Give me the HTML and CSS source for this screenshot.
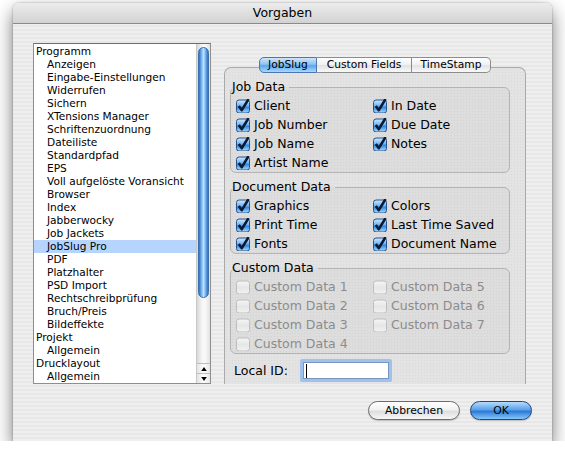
FILE: index.html
```html
<!DOCTYPE html>
<html lang="de">
<head>
<meta charset="utf-8">
<title>Vorgaben</title>
<link rel="stylesheet" href="styles.css">
</head>
<body>
<svg class="defs" width="0" height="0" aria-hidden="true">
  <defs>
    <linearGradient id="cbOn" x1="0" y1="0" x2="0" y2="1">
      <stop offset="0" stop-color="#d2eaff"/>
      <stop offset="0.45" stop-color="#6db3f2"/>
      <stop offset="0.55" stop-color="#2f86e0"/>
      <stop offset="1" stop-color="#a9dcff"/>
    </linearGradient>
    <linearGradient id="cbOff" x1="0" y1="0" x2="0" y2="1">
      <stop offset="0" stop-color="#f6f6f6"/>
      <stop offset="0.5" stop-color="#e6e6e6"/>
      <stop offset="1" stop-color="#f2f2f2"/>
    </linearGradient>
    <symbol id="checkOn" viewBox="0 0 14 14">
      <rect x="0.5" y="1" width="13" height="13" rx="2.5" fill="url(#cbOn)" stroke="#28508c"/>
      <path d="M2.8 7 L5.8 11.2 L12.6 0" stroke="#0a1a33" stroke-width="2.6" fill="none" stroke-linejoin="round"/>
    </symbol>
    <symbol id="checkOff" viewBox="0 0 14 14">
      <rect x="0.5" y="1" width="13" height="13" rx="2.5" fill="url(#cbOff)" stroke="#bdbdbd"/>
    </symbol>
  </defs>
</svg>

<div class="window">
  <div class="titlebar">Vorgaben</div>
  <div class="content">
    <div class="main">
      <div class="list">
        <ul class="items">
          <li class="l0">Programm</li>
          <li class="l1">Anzeigen</li>
          <li class="l1">Eingabe-Einstellungen</li>
          <li class="l1">Widerrufen</li>
          <li class="l1">Sichern</li>
          <li class="l1">XTensions Manager</li>
          <li class="l1">Schriftenzuordnung</li>
          <li class="l1">Dateiliste</li>
          <li class="l1">Standardpfad</li>
          <li class="l1">EPS</li>
          <li class="l1">Voll aufgelöste Voransicht</li>
          <li class="l1">Browser</li>
          <li class="l1">Index</li>
          <li class="l1">Jabberwocky</li>
          <li class="l1">Job Jackets</li>
          <li class="l1 selected">JobSlug Pro</li>
          <li class="l1">PDF</li>
          <li class="l1">Platzhalter</li>
          <li class="l1">PSD Import</li>
          <li class="l1">Rechtschreibprüfung</li>
          <li class="l1">Bruch/Preis</li>
          <li class="l1">Bildeffekte</li>
          <li class="l0">Projekt</li>
          <li class="l1">Allgemein</li>
          <li class="l0">Drucklayout</li>
          <li class="l1">Allgemein</li>
        </ul>
        <div class="scrollbar">
          <div class="track"><div class="thumb"></div></div>
          <div class="arrow up"><svg viewBox="0 0 7 5" width="6" height="4"><path d="M3.5 0 L7 5 L0 5 Z" fill="#000"/></svg></div>
          <div class="arrow down"><svg viewBox="0 0 7 5" width="6" height="4"><path d="M0 0 L7 0 L3.5 5 Z" fill="#000"/></svg></div>
        </div>
      </div>

      <div class="prefs">
        <div class="tabs">
          <div class="tab active">JobSlug</div>
          <div class="tab">Custom Fields</div>
          <div class="tab">TimeStamp</div>
        </div>
        <div class="panel">
          <fieldset class="group">
            <legend>Job Data</legend>
            <div class="grid">
              <label class="cb"><svg><use href="#checkOn"/></svg>Client</label>
              <label class="cb"><svg><use href="#checkOn"/></svg>In Date</label>
              <label class="cb"><svg><use href="#checkOn"/></svg>Job Number</label>
              <label class="cb"><svg><use href="#checkOn"/></svg>Due Date</label>
              <label class="cb"><svg><use href="#checkOn"/></svg>Job Name</label>
              <label class="cb"><svg><use href="#checkOn"/></svg>Notes</label>
              <label class="cb"><svg><use href="#checkOn"/></svg>Artist Name</label>
            </div>
          </fieldset>
          <fieldset class="group">
            <legend>Document Data</legend>
            <div class="grid">
              <label class="cb"><svg><use href="#checkOn"/></svg>Graphics</label>
              <label class="cb"><svg><use href="#checkOn"/></svg>Colors</label>
              <label class="cb"><svg><use href="#checkOn"/></svg>Print Time</label>
              <label class="cb"><svg><use href="#checkOn"/></svg>Last Time Saved</label>
              <label class="cb"><svg><use href="#checkOn"/></svg>Fonts</label>
              <label class="cb"><svg><use href="#checkOn"/></svg>Document Name</label>
            </div>
          </fieldset>
          <fieldset class="group">
            <legend>Custom Data</legend>
            <div class="grid">
              <label class="cb off"><svg><use href="#checkOff"/></svg>Custom Data 1</label>
              <label class="cb off"><svg><use href="#checkOff"/></svg>Custom Data 5</label>
              <label class="cb off"><svg><use href="#checkOff"/></svg>Custom Data 2</label>
              <label class="cb off"><svg><use href="#checkOff"/></svg>Custom Data 6</label>
              <label class="cb off"><svg><use href="#checkOff"/></svg>Custom Data 3</label>
              <label class="cb off"><svg><use href="#checkOff"/></svg>Custom Data 7</label>
              <label class="cb off"><svg><use href="#checkOff"/></svg>Custom Data 4</label>
            </div>
          </fieldset>
          <div class="localid">
            <span class="lbl">Local ID:</span>
            <div class="field"><span class="caret"></span></div>
          </div>
        </div>
      </div>
    </div>

    <div class="buttons">
      <div class="btn cancel">Abbrechen</div>
      <div class="btn ok">OK</div>
    </div>
  </div>
</div>
</body>
</html>
```

FILE: styles.css
```css
* { box-sizing: border-box; }
html, body { margin: 0; padding: 0; background: #fff; }
body { font-family: "DejaVu Sans", "Lucida Grande", sans-serif; color: #000; }
.defs { position: absolute; width: 0; height: 0; }

.window {
  margin: 3px 0 0 13px;
  width: 539px;
  height: 438px;
  border-radius: 6px 6px 0 0;
  box-shadow: 0 8px 18px rgba(0,0,0,0.55), 0 0 2px rgba(0,0,0,0.35);
  background: repeating-linear-gradient(to bottom, #efefef 0 2px, #e7e7e7 2px 4px);
  display: flex;
  flex-direction: column;
  overflow: hidden;
}
.titlebar {
  flex: none;
  height: 21px;
  background: linear-gradient(#ececec, #d2d2d2);
  border-bottom: 1px solid #8a8a8a;
  text-align: center;
  font-size: 12.5px;
  line-height: 20px;
}
.content {
  flex: 1;
  display: flex;
  flex-direction: column;
  padding: 19px 20px 22px 20px;
}
.main { display: flex; height: 341px; }

/* list */
.list {
  width: 178px;
  height: 341px;
  border: 1px solid #8e8e8e;
  border-top-color: #6e6e6e;
  background: #fff;
  display: flex;
}
.items {
  list-style: none;
  margin: 0;
  padding: 1px 0 0 0;
  flex: 1;
  font-size: 10.6px;
  overflow: hidden;
}
.items li { height: 13px; line-height: 13px; white-space: nowrap; }
.items .l0 { padding-left: 2px; }
.items .l1 { padding-left: 13px; }
.items .selected { background: #b5d5ff; }

.scrollbar {
  width: 14px;
  display: flex;
  flex-direction: column;
  border-left: 1px solid #c8c8c8;
}
.track {
  flex: 1;
  background: linear-gradient(to right, #d8d8d8, #f6f6f6 40%, #fafafa 60%, #e2e2e2);
  padding: 3px 1px 0 1px;
}
.thumb {
  height: 251px;
  border-radius: 6px;
  border: 1px solid #3c6fb0;
  background: linear-gradient(to right, #2f6fc0, #7cb8f2 30%, #bfe0ff 50%, #7cb8f2 70%, #2f6fc0);
}
.arrow {
  height: 10px;
  display: flex;
  align-items: center;
  justify-content: center;
  background: linear-gradient(to right, #e4e4e4, #fdfdfd 50%, #e8e8e8);
  border-top: 1px solid #bdbdbd;
}
.arrow svg { display: block; }

/* right side */
.prefs {
  margin-left: 13px;
  width: 302px;
  display: flex;
  flex-direction: column;
  padding-top: 14px;
}
.tabs {
  display: flex;
  justify-content: center;
  position: relative;
  z-index: 1;
  height: 16px;
  margin-bottom: -6px;
}
.tab {
  height: 16px;
  font-size: 10.7px;
  line-height: 14px;
  text-align: center;
  border: 1px solid #8c8c8c;
  border-left: none;
  background: linear-gradient(#ffffff, #f0f0f0 50%, #e2e2e2 51%, #f8f8f8);
}
.tab:nth-child(1) { width: 58px; border-left: 1px solid #5a7fb4; border-radius: 5px 0 0 5px; }
.tab:nth-child(2) { width: 95px; }
.tab:nth-child(3) { width: 79px; border-radius: 0 5px 5px 0; }
.tab.active {
  border-color: #4d76b0;
  background: linear-gradient(#cfe6fd, #8cc2f4 45%, #5ea5ec 55%, #a8dafc);
}

.panel {
  flex: 1;
  border: 1px solid #a9a9a9;
  border-bottom: none;
  border-radius: 7px 7px 0 0;
  background-color: #e3e3e3;
  background-image: radial-gradient(circle, #d9d9d9 0.6px, transparent 0.8px);
  background-size: 3px 3px;
  padding: 12px 15px 0 5px;
}
.group {
  margin: 0 0 7px 0;
  padding: 2px 0 0 5px;
  border: 1px solid #b4b4b4;
  border-radius: 6px;
  background: rgba(0,0,0,0.025);
  min-width: 0;
}
.group legend {
  font-size: 12.5px;
  line-height: 14px;
  padding: 0 4px 0 0;
  margin-left: -4px;
}
.grid {
  display: grid;
  grid-template-columns: 137px 1fr;
  grid-auto-rows: 19px;
}
.cb {
  display: flex;
  align-items: center;
  font-size: 12.5px;
  white-space: nowrap;
}
.cb svg { width: 14px; height: 14px; margin-right: 4px; flex: none; overflow: visible; }
.cb.off { color: #8c8c8c; }

.localid {
  display: flex;
  align-items: center;
  margin-top: -2px;
  padding-left: 4px;
  height: 23px;
}
.lbl { font-size: 12.5px; width: 66px; }
.field {
  width: 92px;
  height: 23px;
  border: 3px solid #9fc2ec;
  border-radius: 2px;
  background: #fff;
  box-shadow: inset 0 0 0 1px #7a96bf;
  display: flex;
  align-items: center;
  padding-left: 3px;
}
.caret { width: 1px; height: 14px; background: #000; }

/* buttons */
.buttons {
  display: flex;
  justify-content: flex-end;
  gap: 10px;
  margin-top: 17px;
}
.btn {
  height: 19px;
  border-radius: 10px;
  font-size: 10.8px;
  line-height: 17px;
  text-align: center;
  box-shadow: 0 1px 1px rgba(0,0,0,0.2);
}
.btn.cancel {
  width: 92px;
  border: 1px solid #6b6b6b;
  background: linear-gradient(#ffffff, #f2f2f2 45%, #dedede 55%, #f7f7f7);
}
.btn.ok {
  width: 62px;
  border: 1px solid #23467c;
  background: linear-gradient(#b7dbfb, #5aa2ea 45%, #2c7ad8 55%, #86c8fb);
}
```
